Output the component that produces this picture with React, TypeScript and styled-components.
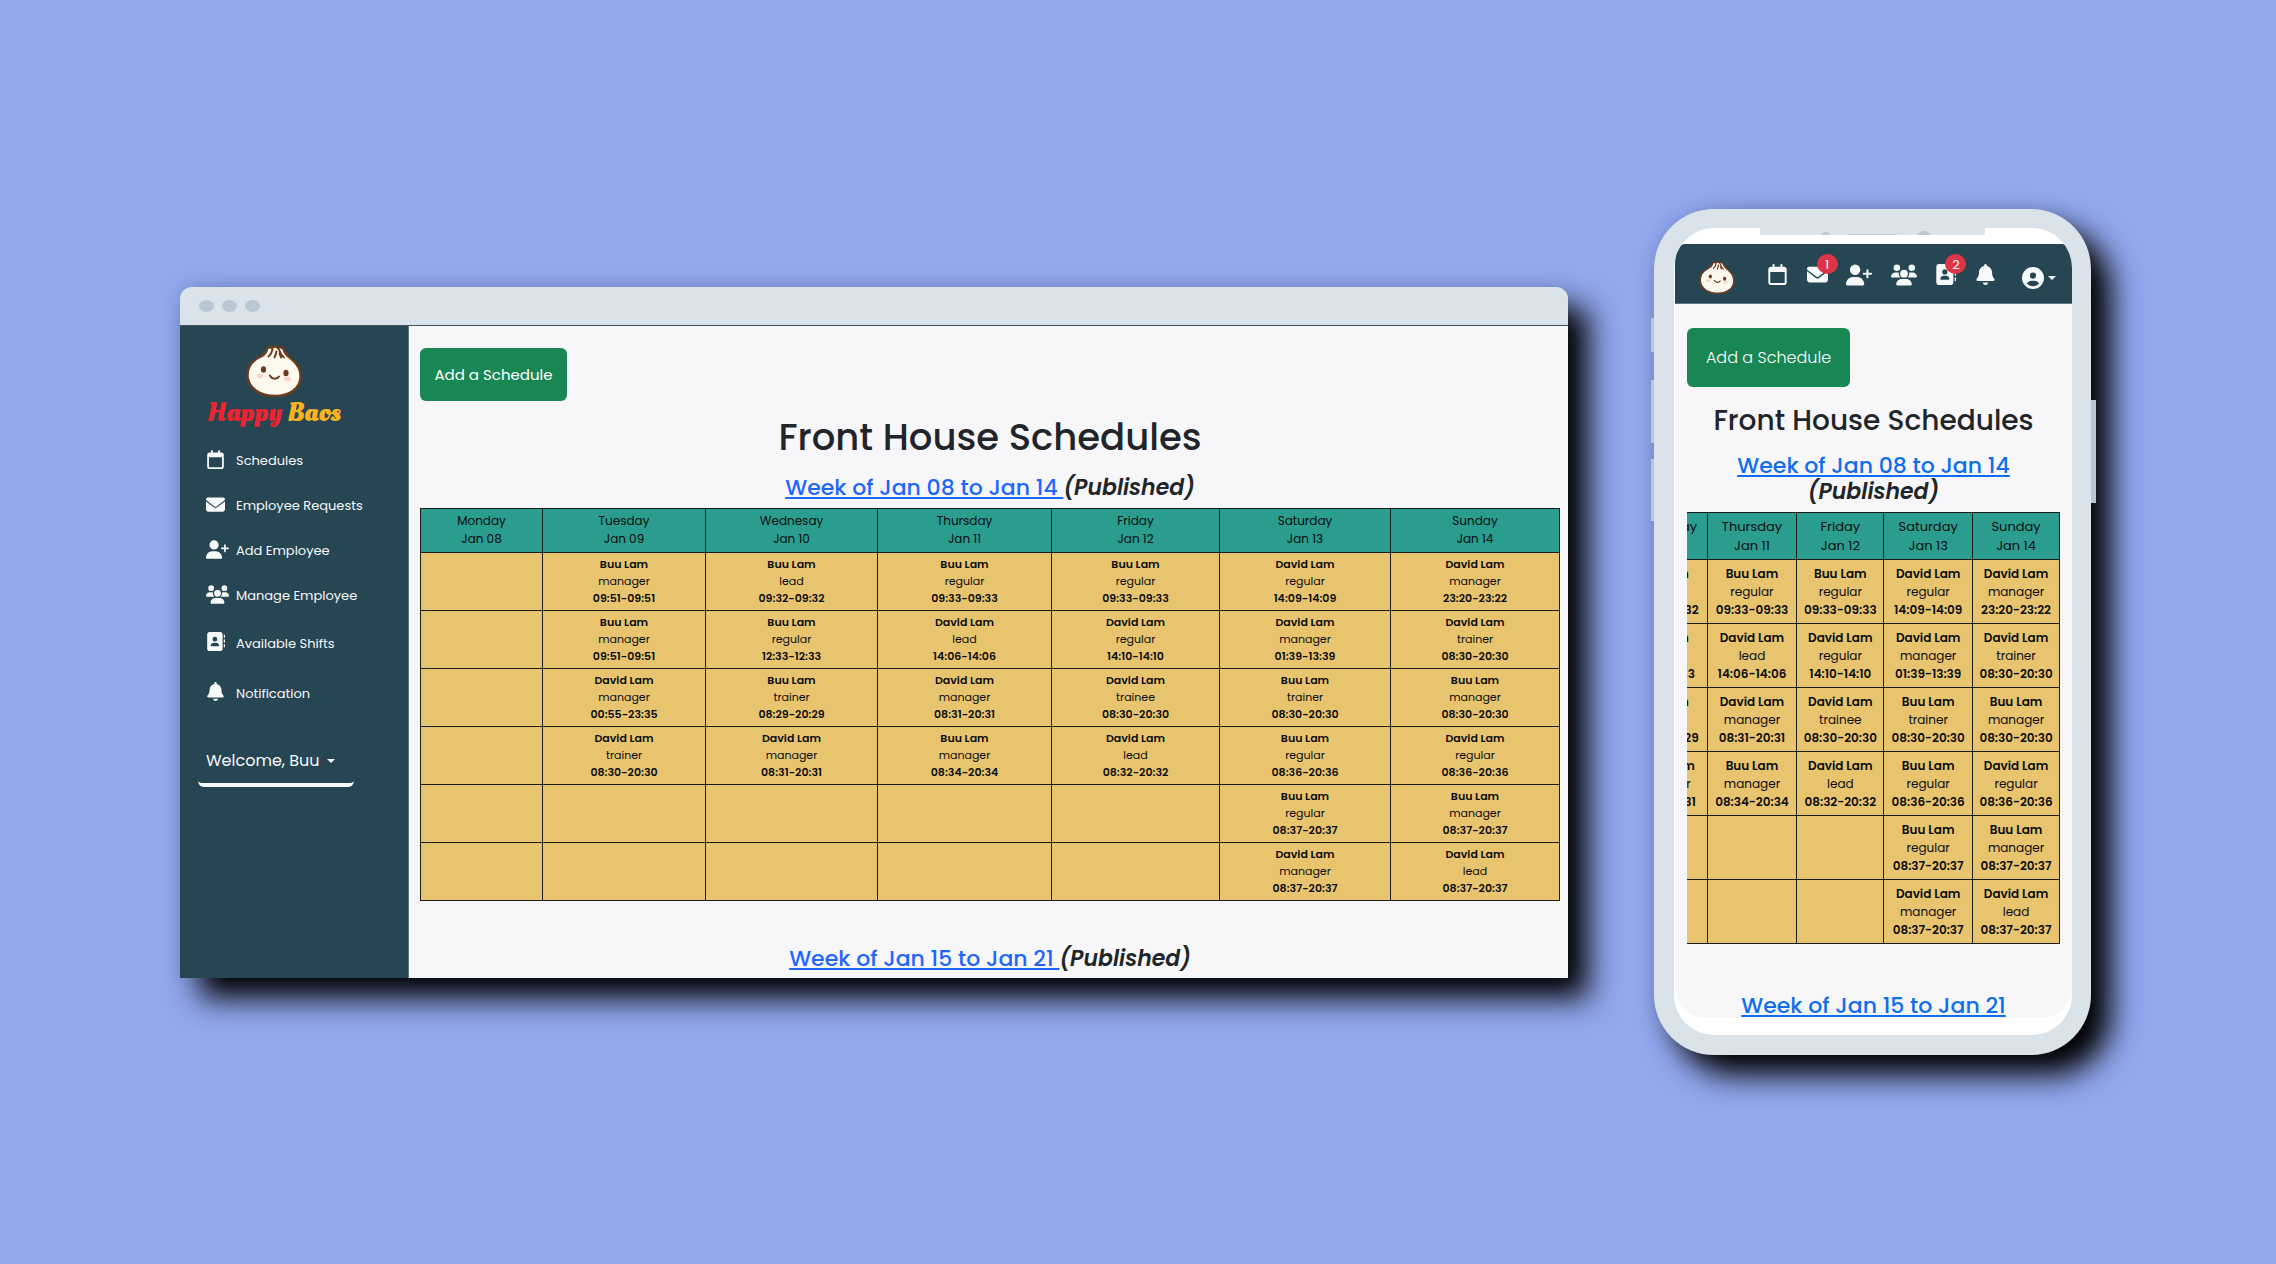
import React from 'react';
import styled, { createGlobalStyle, css } from 'styled-components';
import {
  FaAddressBook,
  FaBell,
  FaCircleUser,
  FaEnvelope,
  FaRegCalendar,
  FaUserPlus,
  FaUsers,
} from 'react-icons/fa6';

const colors = {
  backdrop: '#91a7ee',
  bezel: '#dae2ea',
  bezelDark: '#b9c6d3',
  navy: '#264653',
  page: '#f7f7fa',
  green: '#198754',
  teal: '#2a9d8f',
  sand: '#e8c46f',
  ink: '#212529',
  red: '#dc3545',
};

const GlobalStyle = createGlobalStyle`
  *, *::before, *::after { box-sizing: border-box; }
  body {
    margin: 0;
    background: ${colors.backdrop};
    color: ${colors.ink};
    font-family: Poppins, Inter, "Open Sans", sans-serif;
  }
`;

/* ---------- data ---------- */

type Shift = [name: string, role: string, time: string] | null;

const B = 'Buu Lam';
const D = 'David Lam';

const days: [string, string][] = [
  ['Monday', 'Jan 08'],
  ['Tuesday', 'Jan 09'],
  ['Wednesay', 'Jan 10'],
  ['Thursday', 'Jan 11'],
  ['Friday', 'Jan 12'],
  ['Saturday', 'Jan 13'],
  ['Sunday', 'Jan 14'],
];

const shifts: Shift[][] = [
  [null, [B, 'manager', '09:51-09:51'], [B, 'lead', '09:32-09:32'], [B, 'regular', '09:33-09:33'], [B, 'regular', '09:33-09:33'], [D, 'regular', '14:09-14:09'], [D, 'manager', '23:20-23:22']],
  [null, [B, 'manager', '09:51-09:51'], [B, 'regular', '12:33-12:33'], [D, 'lead', '14:06-14:06'], [D, 'regular', '14:10-14:10'], [D, 'manager', '01:39-13:39'], [D, 'trainer', '08:30-20:30']],
  [null, [D, 'manager', '00:55-23:35'], [B, 'trainer', '08:29-20:29'], [D, 'manager', '08:31-20:31'], [D, 'trainee', '08:30-20:30'], [B, 'trainer', '08:30-20:30'], [B, 'manager', '08:30-20:30']],
  [null, [D, 'trainer', '08:30-20:30'], [D, 'manager', '08:31-20:31'], [B, 'manager', '08:34-20:34'], [D, 'lead', '08:32-20:32'], [B, 'regular', '08:36-20:36'], [D, 'regular', '08:36-20:36']],
  [null, null, null, null, null, [B, 'regular', '08:37-20:37'], [B, 'manager', '08:37-20:37']],
  [null, null, null, null, null, [D, 'manager', '08:37-20:37'], [D, 'lead', '08:37-20:37']],
];

const wideColumns = [122, 163, 172, 174, 168, 171, 169];
const compactColumns = [76, 88, 89, 90, 87, 89, 87];

const menu = [
  { label: 'Schedules', Icon: FaRegCalendar, size: 19, navSize: 21 },
  { label: 'Employee Requests', Icon: FaEnvelope, size: 19, navSize: 21, count: 1 },
  { label: 'Add Employee', Icon: FaUserPlus, size: 23, navSize: 26 },
  { label: 'Manage Employee', Icon: FaUsers, size: 23, navSize: 26 },
  { label: 'Available Shifts', Icon: FaAddressBook, size: 19, navSize: 21, count: 2, roomy: true },
  { label: 'Notification', Icon: FaBell, size: 19, navSize: 21, roomy: true },
];

/* ---------- scene ---------- */

const Scene = styled.main`
  display: flex;
  align-items: center;
  gap: 86px;
  min-height: 100vh;
  padding: 0 185px 0 180px;
`;

/* ---------- browser frame ---------- */

const Browser = styled.section`
  flex: 1;
  min-width: 0;
  border-radius: 12px 12px 0 0;
  box-shadow: 20px 20px 30px #000, 0 0 20px rgba(0, 0, 0, 0.12);
`;

const TitleBar = styled.div`
  display: flex;
  align-items: center;
  gap: 8px;
  height: 39px;
  padding-left: 19px;
  border-bottom: 1px solid #4c5157;
  border-radius: 12px 12px 0 0;
  background: ${colors.bezel};
`;

const WindowDot = styled.span`
  width: 15px;
  height: 12px;
  border-radius: 50%;
  background: ${colors.bezelDark};
`;

const BrowserBody = styled.div`
  display: flex;
  background: ${colors.page};
`;

const Sidebar = styled.aside`
  display: flex;
  flex-direction: column;
  flex: 0 0 229px;
  padding: 19px 0 0 18px;
  border-right: 1px solid #5d7782;
  background: ${colors.navy};
  color: #f8f9fa;
`;

const Brand = styled.a`
  display: flex;
  flex-direction: column;
  align-items: center;
  width: 152px;
  margin-bottom: 10px;
  color: inherit;
  text-decoration: none;
`;

const BrandName = styled.span`
  color: #ee2330;
  font: 700 27px/32px "Oleo Script", Lobster, "Lobster Two", Pacifico, "Dancing Script", "Liberation Serif", serif;
  white-space: nowrap;
`;

const BrandAccent = styled.span`
  color: #fbb321;
`;

const SideLink = styled.a<{ $roomy?: boolean }>`
  display: flex;
  align-items: center;
  gap: 7px;
  height: ${(p) => (p.$roomy ? 50 : 45)}px;
  padding-left: 8px;
  color: inherit;
  font-size: 13px;
  line-height: 20px;
  text-decoration: none;
  white-space: nowrap;
`;

const SideIcon = styled.span`
  display: flex;
  width: 23px;
  padding-bottom: 4px;
`;

const UserMenu = styled.button`
  display: flex;
  align-items: center;
  gap: 7px;
  width: 156px;
  height: 48px;
  margin-top: 20px;
  padding: 0 8px;
  border: 0;
  border-bottom: 4px solid #f8f9fa;
  border-radius: 6px;
  background: none;
  color: inherit;
  font: inherit;
  font-size: 16px;
  white-space: nowrap;
`;

const Caret = styled.span`
  border-top: 4px solid currentColor;
  border-right: 4px solid transparent;
  border-left: 4px solid transparent;
`;

/* ---------- shared schedule parts ---------- */

const Content = styled.div<{ $compact?: boolean }>`
  display: flex;
  flex: 1;
  flex-direction: column;
  min-width: 0;
  ${(p) =>
    p.$compact
      ? css`
          padding: 24px 12px 0;
        `
      : css`
          padding: 22px 8px 6px 11px;
        `}
`;

const AddButton = styled.button<{ $compact?: boolean }>`
  align-self: flex-start;
  width: ${(p) => (p.$compact ? 163 : 147)}px;
  height: ${(p) => (p.$compact ? 59 : 53)}px;
  padding: 0;
  border: 0;
  border-radius: 6px;
  background: ${colors.green};
  color: #fff;
  font: inherit;
  font-size: ${(p) => (p.$compact ? 16 : 15)}px;
  font-weight: ${(p) => (p.$compact ? 300 : 400)};
`;

const Heading = styled.h1<{ $compact?: boolean }>`
  margin: ${(p) => (p.$compact ? '17px 0 15px' : '14px 0 16px')};
  font-size: ${(p) => (p.$compact ? 28 : 37)}px;
  font-weight: 500;
  line-height: ${(p) => (p.$compact ? 34 : 44)}px;
  text-align: center;
  white-space: nowrap;
`;

const WeekTitle = styled.h2`
  margin: 0;
  font-size: 22px;
  font-weight: 500;
  line-height: 26px;
  text-align: center;
`;

const WeekLink = styled.a<{ $compact?: boolean }>`
  color: ${(p) => (p.$compact ? '#0d6ef0' : '#1f66ff')};
  text-decoration: underline;
  text-decoration-thickness: 2px;
  text-underline-offset: 2px;
  text-decoration-skip-ink: none;
  white-space: pre;
`;

const Status = styled.em`
  font-weight: 600;
`;

const TableClip = styled.div<{ $compact?: boolean }>`
  display: flex;
  justify-content: flex-end;
  overflow: hidden;
  margin: ${(p) => (p.$compact ? '7px 0 49px' : '7px 0 45px')};
`;

const Table = styled.table<{ $compact?: boolean }>`
  flex: none;
  width: ${(p) => (p.$compact ? '606px' : '100%')};
  border-collapse: collapse;
  table-layout: fixed;
  color: #0b0d0e;
  font-size: ${(p) => (p.$compact ? 12 : 11)}px;
  line-height: ${(p) => (p.$compact ? 18 : 17)}px;
  text-align: center;
`;

const DayCell = styled.th<{ $compact?: boolean }>`
  height: ${(p) => (p.$compact ? 47 : 44)}px;
  padding: 0;
  border: 1px solid #1c1c18;
  background: ${colors.teal};
  font-size: ${(p) => (p.$compact ? 13 : 12)}px;
  font-weight: 400;
  line-height: ${(p) => (p.$compact ? 19 : 18)}px;
`;

const ShiftCell = styled.td<{ $compact?: boolean }>`
  height: ${(p) => (p.$compact ? 64 : 58)}px;
  padding: 0;
  border: 1px solid #1c1c18;
  background: ${colors.sand};
  white-space: nowrap;
`;

const Line = styled.div<{ $strong?: boolean }>`
  font-weight: ${(p) => (p.$strong ? 600 : 400)};
`;

/* ---------- phone frame ---------- */

const Phone = styled.section`
  position: relative;
  flex: 0 0 437px;
  min-width: 0;
  padding: 19px 19px 20px 20px;
  border-radius: 60px;
  background: ${colors.bezel};
  box-shadow: 20px 20px 30px #000, 0 0 20px rgba(0, 0, 0, 0.12);
`;

const SideKey = styled.span<{ $side: 'left' | 'right'; $top: number; $height: number }>`
  position: absolute;
  top: ${(p) => p.$top}px;
  ${(p) => (p.$side === 'left' ? 'left: -3px; width: 3px;' : 'right: -5px; width: 5px;')}
  height: ${(p) => p.$height}px;
  background: ${colors.bezelDark};
`;

const Screen = styled.div`
  position: relative;
  overflow: hidden;
  padding: 16px 0 17px 1px;
  border-radius: 40px;
  background: #fff;
`;

const Notch = styled.div`
  position: absolute;
  top: 0;
  left: 86px;
  right: 87px;
  height: 7px;
  background: ${colors.bezel};
`;

const NotchArt = styled.svg`
  display: block;
  width: 100%;
  height: 7px;
`;

const PhoneApp = styled.div`
  overflow: hidden;
  height: 774px;
  border-radius: 10px 10px 30px 30px / 20px 20px 30px 30px;
  background: ${colors.page};
`;

const NavBar = styled.nav`
  display: flex;
  align-items: center;
  height: 60px;
  padding: 0 16px 0 24px;
  border-bottom: 1px solid #5d7782;
  background: ${colors.navy};
  color: #f8f9fa;
`;

const NavBrand = styled.a`
  display: flex;
  padding-top: 8px;
`;

const NavIcons = styled.div`
  display: flex;
  flex: 1;
  align-items: center;
  justify-content: space-between;
  padding: 2px 26px 0 32px;
`;

const NavLink = styled.a`
  position: relative;
  display: flex;
  color: inherit;
`;

const Badge = styled.span`
  position: absolute;
  top: -10px;
  right: -10px;
  width: 21px;
  height: 20px;
  border-radius: 50%;
  background: ${colors.red};
  font-size: 13px;
  line-height: 21px;
  text-align: center;
`;

const Account = styled.button`
  display: flex;
  align-items: center;
  gap: 4px;
  padding: 8px 0 0;
  border: 0;
  background: none;
  color: inherit;
`;

/* ---------- components ---------- */

function Bao({ width }: { width: number }) {
  return (
    <svg width={width} height={Math.round((width * 52) / 56)} viewBox="0 0 56 52" aria-hidden="true">
      <path
        d="M20.500 6C20.500 2.500 24 1.500 26 3C27.500 1 30.500 1 32 3C34 1.500 37.500 2.500 38 5.500C39.500 10 43.500 12 48 16.500C53 21.500 54.800 27 54.500 32C54 44 43 51 29.500 51C14 51 2 43 1.500 30.500C1.500 21 7 15.500 13 12.500C17 10.500 19.500 9 20.500 6Z"
        fill="#fef9ee"
        stroke="#6f3a20"
        strokeWidth="2.400"
      />
      <path
        d="M26.500 4.500C26 7 25 9.500 22.500 11.500M30.500 6.500C30 9 29.500 10.500 28.500 12.500M33 4.500C34 7.500 35.500 10.500 38 12.500M33.500 8.500L35 12.500"
        fill="none"
        stroke="#6f3a20"
        strokeWidth="1.900"
        strokeLinecap="round"
      />
      <ellipse cx="17.500" cy="24.500" rx="2.600" ry="3.200" fill="#6f3a20" />
      <ellipse cx="40" cy="28" rx="2.600" ry="3.200" fill="#6f3a20" />
      <ellipse cx="14" cy="31" rx="3.400" ry="2.200" fill="#f9d3cd" />
      <ellipse cx="41.500" cy="34" rx="3.400" ry="2.200" fill="#f9d3cd" />
      <path d="M24 30.500C25.500 34.500 31 34.500 33 31.500" fill="none" stroke="#6f3a20" strokeWidth="2" strokeLinecap="round" />
    </svg>
  );
}

function Schedule({ compact = false }: { compact?: boolean }) {
  const columns = compact ? compactColumns : wideColumns;
  const total = columns.reduce((sum, w) => sum + w, 0);
  return (
    <Content $compact={compact}>
      <AddButton type="button" $compact={compact}>Add a Schedule</AddButton>
      <Heading $compact={compact}>Front House Schedules</Heading>
      <WeekTitle>
        <WeekLink href="#jan-08" $compact={compact}>{compact ? 'Week of Jan 08 to Jan 14' : 'Week of Jan 08 to Jan 14 '}</WeekLink>
        {compact && <br />}
        <Status>(Published)</Status>
      </WeekTitle>
      <TableClip $compact={compact}>
        <Table $compact={compact}>
          <colgroup>
            {columns.map((w, i) => (
              <col key={i} style={{ width: `${(w / total) * 100}%` }} />
            ))}
          </colgroup>
          <thead>
            <tr>
              {days.map(([day, date]) => (
                <DayCell key={day} scope="col" $compact={compact}>
                  <div>{day}</div>
                  <div>{date}</div>
                </DayCell>
              ))}
            </tr>
          </thead>
          <tbody>
            {shifts.map((row, r) => (
              <tr key={r}>
                {row.map((shift, c) => (
                  <ShiftCell key={c} $compact={compact}>
                    {shift && (
                      <>
                        <Line $strong>{shift[0]}</Line>
                        <Line>{shift[1]}</Line>
                        <Line $strong>{shift[2]}</Line>
                      </>
                    )}
                  </ShiftCell>
                ))}
              </tr>
            ))}
          </tbody>
        </Table>
      </TableClip>
      <WeekTitle>
        <WeekLink href="#jan-15" $compact={compact}>{compact ? 'Week of Jan 15 to Jan 21' : 'Week of Jan 15 to Jan 21 '}</WeekLink>
        {!compact && <Status>(Published)</Status>}
      </WeekTitle>
    </Content>
  );
}

function DesktopPreview() {
  return (
    <Browser>
      <TitleBar>
        <WindowDot />
        <WindowDot />
        <WindowDot />
      </TitleBar>
      <BrowserBody>
        <Sidebar>
          <Brand href="#home">
            <Bao width={56} />
            <BrandName>
              Happy <BrandAccent>Baos</BrandAccent>
            </BrandName>
          </Brand>
          {menu.map(({ label, Icon, size, roomy }) => (
            <SideLink key={label} href="#menu" $roomy={roomy}>
              <SideIcon>
                <Icon size={size} />
              </SideIcon>
              {label}
            </SideLink>
          ))}
          <UserMenu type="button">
            Welcome, Buu <Caret />
          </UserMenu>
        </Sidebar>
        <Schedule />
      </BrowserBody>
    </Browser>
  );
}

function PhonePreview() {
  return (
    <Phone>
      <SideKey $side="left" $top={109} $height={34} />
      <SideKey $side="left" $top={171} $height={63} />
      <SideKey $side="left" $top={250} $height={62} />
      <SideKey $side="right" $top={191} $height={103} />
      <Screen>
        <Notch>
          <NotchArt viewBox="0 0 225 7" preserveAspectRatio="none">
            <circle cx="66" cy="8" r="4" fill={colors.bezelDark} />
            <rect x="88" y="6" width="50" height="1" fill={colors.bezelDark} opacity="0.5" />
            <circle cx="164" cy="10" r="7" fill={colors.bezelDark} />
          </NotchArt>
        </Notch>
        <PhoneApp>
          <NavBar>
            <NavBrand href="#home" aria-label="Home">
              <Bao width={36} />
            </NavBrand>
            <NavIcons>
              {menu.map(({ label, Icon, navSize, count }) => (
                <NavLink key={label} href="#menu" aria-label={label}>
                  <Icon size={navSize} />
                  {count && <Badge>{count}</Badge>}
                </NavLink>
              ))}
            </NavIcons>
            <Account type="button" aria-label="Account">
              <FaCircleUser size={22} />
              <Caret />
            </Account>
          </NavBar>
          <Schedule compact />
        </PhoneApp>
      </Screen>
    </Phone>
  );
}

export default function App() {
  return (
    <Scene>
      <GlobalStyle />
      <DesktopPreview />
      <PhonePreview />
    </Scene>
  );
}
